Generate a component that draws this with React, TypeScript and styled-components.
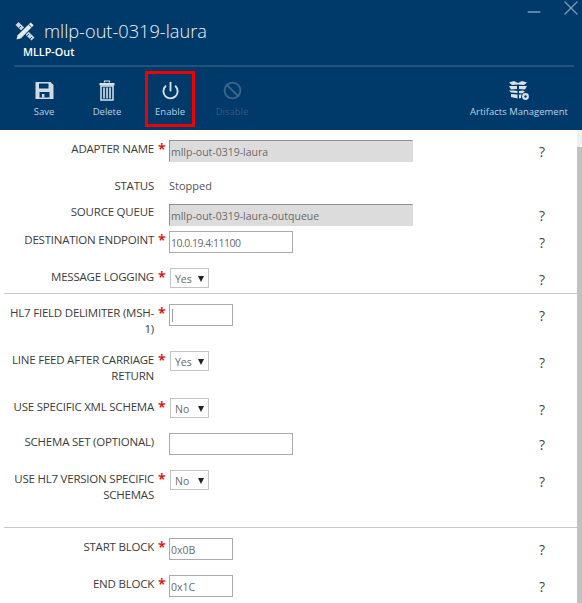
import React from "react";
import styled, { createGlobalStyle } from "styled-components";
import { Power, Ban, X, Minus } from "lucide-react";

const Global = createGlobalStyle`
  html, body { margin: 0; padding: 0; background: #fff; overflow: hidden; }
  * { box-sizing: border-box; }
  body { font-family: "Open Sans", "Liberation Sans", sans-serif; }
`;

const Page = styled.div`
  width: 582px;
  height: 603px;
  display: flex;
  flex-direction: column;
  overflow: hidden;
`;

const Header = styled.header`
  height: 130px;
  flex: none;
  background: #003a6b;
  display: flex;
  flex-direction: column;
  position: relative;
`;

const WindowControls = styled.div`
  position: absolute;
  top: 0;
  right: -1px;
  display: flex;
  align-items: flex-start;
  gap: 15px;
  color: #7f9cb5;
`;

const TitleRow = styled.div`
  display: flex;
  align-items: center;
  gap: 9px;
  padding: 18px 0 0 15px;
  height: 44px;
`;

const Title = styled.h1`
  margin: 0;
  font-size: 18.2px;
  font-weight: 300;
  line-height: 26px;
  color: #eef3f7;
`;

const Subtitle = styled.div`
  font-size: 10.8px;
  font-weight: 600;
  line-height: 16px;
  color: #fff;
  padding: 0 0 0 23px;
  height: 21px;
`;

const Rule = styled.div`
  height: 2px;
  margin: 0 8px 0 14px;
  background: #1d5480;
`;

const Toolbar = styled.div`
  display: flex;
  align-items: flex-start;
  padding: 4px 13px 0 14px;
  flex: 1;
`;

const ToolButton = styled.div<{ $width: number; $disabled?: boolean; $outlined?: boolean; $gap?: number }>`
  width: ${(p) => p.$width}px;
  height: 56px;
  margin-left: ${(p) => p.$gap ?? 0}px;
  display: flex;
  flex-direction: column;
  align-items: center;
  color: ${(p) => (p.$disabled ? "#3d6689" : "#d5dfe8")};
  border: 3px solid ${(p) => (p.$outlined ? "#f00000" : "transparent")};
  padding-top: 3px;
`;

const ToolIcon = styled.span`
  height: 27px;
  display: flex;
  align-items: center;
  justify-content: center;
`;

const ToolLabel = styled.span<{ $disabled?: boolean }>`
  font-size: 9.5px;
  line-height: 14px;
  margin-top: 1px;
  white-space: nowrap;
  color: ${(p) => (p.$disabled ? "#33597c" : "#b9d3e2")};
`;

const Spacer = styled.div`
  flex: 1;
`;

const Body = styled.div`
  flex: 1;
  display: flex;
  min-height: 0;
`;

const Form = styled.main`
  flex: 1;
  min-width: 0;
  padding: 10px 0 0 4px;
`;

const Track = styled.div`
  width: 5px;
  background: #f1f1f1;
  padding-top: 17px;
`;

const Thumb = styled.div`
  height: 100%;
  background: #c1c1c1;
`;

const Row = styled.div<{ $height: number }>`
  display: grid;
  grid-template-columns: 150px 15px 244px 1fr;
  height: ${(p) => p.$height}px;
  align-items: start;
`;

const Label = styled.label<{ $offset?: number }>`
  text-align: right;
  font-size: 11.5px;
  line-height: 16px;
  color: #3c3c3c;
  letter-spacing: -0.22px;
  padding-top: ${(p) => p.$offset ?? 1}px;
`;

const Star = styled.span<{ $offset?: number }>`
  color: #e00000;
  font-size: 14px;
  font-weight: 600;
  line-height: 16px;
  padding: ${(p) => p.$offset ?? 1}px 0 0 4px;
`;

const Field = styled.div`
  display: flex;
  align-items: flex-start;
  min-width: 0;
`;

const TextInput = styled.div<{ $width: number; $readOnly?: boolean; $tight?: boolean }>`
  width: ${(p) => p.$width}px;
  height: 22px;
  padding: 3px 0 0 1px;
  font-size: 10.5px;
  line-height: 16px;
  letter-spacing: ${(p) => (p.$tight ? "-0.5px" : "0")};
  color: #6a6a6a;
  white-space: nowrap;
  overflow: hidden;
  background: ${(p) => (p.$readOnly ? "#dcdcdc" : "#fff")};
  border: 1px solid #a9a9a9;
  border-color: ${(p) => (p.$readOnly ? "#8e8e8e #dcdcdc #dcdcdc #8e8e8e" : "#ababab")};
`;

const Caret = styled.span`
  display: block;
  width: 1px;
  height: 13px;
  margin: 1px 0 0 1px;
  background: #a0a0a0;
`;

const Select = styled.div`
  width: 39px;
  height: 20px;
  margin-left: 1px;
  border: 1px solid #c4c4c4;
  display: flex;
  align-items: center;
  justify-content: space-between;
  padding: 1px 4px 0 4px;
  font-size: 10.5px;
  color: #6a6a6a;
`;

const Arrow = styled.span`
  width: 0;
  height: 0;
  border-left: 3.5px solid transparent;
  border-right: 3.5px solid transparent;
  border-top: 6px solid #222;
`;

const StatusValue = styled.span`
  font-size: 11px;
  line-height: 16px;
  color: #555;
  padding-top: 3px;
`;

const Help = styled.span<{ $offset?: number }>`
  padding-left: 126px;
  padding-top: ${(p) => p.$offset ?? 3}px;
  font-size: 14px;
  font-weight: 400;
  line-height: 18px;
  color: #444;
`;

const Divider = styled.hr<{ $after: number }>`
  margin: 0 0 ${(p) => p.$after}px 0;
  border: none;
  height: 1px;
  background: #c8c8c8;
`;

const ToolsIcon = () => (
  <svg width="20" height="20" viewBox="0 0 20 20">
    <path fill="#c9d5df" d="M0.5 4 3.5 1 19.5 16.5 16.5 19.5Z" />
    <path fill="none" stroke="#003a6b" strokeWidth="0.8" d="M4 7 6 5M7 10 9 8M12 15 14 13M15 18 17 16" />
    <path fill="#003a6b" d="M15.6 0 20 4.2 6 18.5 0 20 1.5 13.8Z" />
    <path fill="#e4ebf0" d="M15.6 1.4 18.7 4.3 6 17.3 1.5 18.4 2.6 14.2Z" />
    <path stroke="#003a6b" strokeWidth="0.9" d="M13.6 3.4 16.7 6.4" />
  </svg>
);

const SaveIcon = () => (
  <svg width="19" height="19" viewBox="0 0 19 19">
    <path
      fillRule="evenodd"
      fill="#d0dbe5"
      d="M0.5 1H15.5L18.5 4V18H0.5ZM4 2.5V7.5H13.5V2.5ZM4.5 11V16.5H14.5V11Z"
    />
    <rect x="7" y="13" width="2.4" height="3.5" fill="#d0dbe5" />
  </svg>
);

const TrashIcon = () => (
  <svg width="16" height="21" viewBox="0 0 16 21" fill="none" stroke="#d8e2ea">
    <path d="M5.5 2.5V1H10.5V2.5" strokeWidth="1.2" />
    <path d="M0.5 4.2H15.5" strokeWidth="2.4" />
    <path d="M2 6H14V20H2Z" strokeWidth="1.5" />
    <path d="M5 7.5V18.5M8 7.5V18.5M11 7.5V18.5" strokeWidth="1.6" />
  </svg>
);

const BoxesIcon = () => (
  <svg width="22" height="20" viewBox="0 0 22 20" fill="#d8e0e8">
    <path d="M1 1.5 6 0 10 2 14 0 19 1.5 16 4 10 3.5 4 4Z" />
    <path d="M1 5 9 5 9 8 3 8.5 Z" />
    <path d="M11 5 19 5 17 8.5 11 8Z" />
    <path d="M1 9.5 6 9.5 9.5 10V12L3 11.5Z" />
    <path d="M11 10 15 9.5 17 10.5 14 12.5 11 12Z" />
    <path d="M3 13 9.5 13.5V17.5L3 16Z" />
    <path d="M11 13.5 13.5 13.5 13 17 11 17.5Z" />
    <circle cx="17.5" cy="15.5" r="3.4" />
    <circle cx="17.5" cy="15.5" r="1.2" fill="#003a6b" />
  </svg>
);

export default function App() {
  return (
    <Page>
      <Global />
      <Header>
        <WindowControls>
          <Minus size={20} strokeWidth={1.8} style={{ marginTop: 2 }} />
          <X size={24} strokeWidth={1.3} style={{ marginTop: -4 }} />
        </WindowControls>
        <TitleRow>
          <ToolsIcon />
          <Title>mllp-out-0319-laura</Title>
        </TitleRow>
        <Subtitle>MLLP-Out</Subtitle>
        <Rule />
        <Toolbar>
          <ToolButton $width={60}>
            <ToolIcon><SaveIcon /></ToolIcon>
            <ToolLabel>Save</ToolLabel>
          </ToolButton>
          <ToolButton $width={66}>
            <ToolIcon><TrashIcon /></ToolIcon>
            <ToolLabel>Delete</ToolLabel>
          </ToolButton>
          <ToolButton $width={50} $outlined $gap={5}>
            <ToolIcon><Power size={19} strokeWidth={2.4} /></ToolIcon>
            <ToolLabel>Enable</ToolLabel>
          </ToolButton>
          <ToolButton $width={74} $disabled>
            <ToolIcon><Ban size={19} strokeWidth={2.4} /></ToolIcon>
            <ToolLabel $disabled>Disable</ToolLabel>
          </ToolButton>
          <Spacer />
          <ToolButton $width={100}>
            <ToolIcon><BoxesIcon /></ToolIcon>
            <ToolLabel>Artifacts Management</ToolLabel>
          </ToolButton>
        </Toolbar>
      </Header>
      <Body>
        <Form>
          <Row $height={35}>
            <Label>ADAPTER NAME</Label>
            <Star>*</Star>
            <Field><TextInput $width={244} $readOnly>mllp-out-0319-laura</TextInput></Field>
            <Help>?</Help>
          </Row>
          <Row $height={29}>
            <Label $offset={3}>STATUS</Label>
            <span />
            <Field><StatusValue>Stopped</StatusValue></Field>
            <span />
          </Row>
          <Row $height={27}>
            <Label $offset={0}>SOURCE QUEUE</Label>
            <span />
            <Field><TextInput $width={244} $readOnly>mllp-out-0319-laura-outqueue</TextInput></Field>
            <Help>?</Help>
          </Row>
          <Row $height={37}>
            <Label>DESTINATION ENDPOINT</Label>
            <Star>*</Star>
            <Field><TextInput $width={124} $tight>10.0.19.4:11100</TextInput></Field>
            <Help>?</Help>
          </Row>
          <Row $height={25}>
            <Label>MESSAGE LOGGING</Label>
            <Star>*</Star>
            <Field><Select>Yes<Arrow /></Select></Field>
            <Help>?</Help>
          </Row>
          <Divider $after={10} />
          <Row $height={47}>
            <Label>HL7 FIELD DELIMITER (MSH-1)</Label>
            <Star>*</Star>
            <Field><TextInput $width={64}><Caret /></TextInput></Field>
            <Help>?</Help>
          </Row>
          <Row $height={47}>
            <Label>LINE FEED AFTER CARRIAGE RETURN</Label>
            <Star>*</Star>
            <Field><Select>Yes<Arrow /></Select></Field>
            <Help>?</Help>
          </Row>
          <Row $height={35}>
            <Label>USE SPECIFIC XML SCHEMA</Label>
            <Star>*</Star>
            <Field><Select>No<Arrow /></Select></Field>
            <Help>?</Help>
          </Row>
          <Row $height={37}>
            <Label>SCHEMA SET (OPTIONAL)</Label>
            <span />
            <Field><TextInput $width={124} /></Field>
            <Help>?</Help>
          </Row>
          <Row $height={57}>
            <Label>USE HL7 VERSION SPECIFIC SCHEMAS</Label>
            <Star>*</Star>
            <Field><Select>No<Arrow /></Select></Field>
            <Help>?</Help>
          </Row>
          <Divider $after={10} />
          <Row $height={37}>
            <Label>START BLOCK</Label>
            <Star>*</Star>
            <Field><TextInput $width={64}>0x0B</TextInput></Field>
            <Help>?</Help>
          </Row>
          <Row $height={28}>
            <Label>END BLOCK</Label>
            <Star>*</Star>
            <Field><TextInput $width={64}>0x1C</TextInput></Field>
            <Help>?</Help>
          </Row>
        </Form>
        <Track><Thumb /></Track>
      </Body>
    </Page>
  );
}
